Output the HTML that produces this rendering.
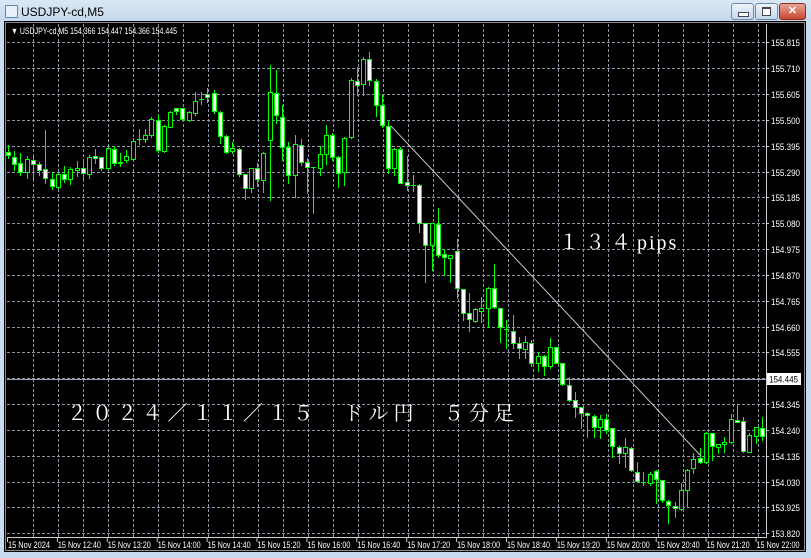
<!DOCTYPE html>
<html><head><meta charset="utf-8"><style>
html,body{margin:0;padding:0;width:811px;height:558px;overflow:hidden;background:#c8dcf0;font-family:"Liberation Sans",sans-serif}
#title{position:absolute;left:0;top:0;width:811px;height:22px;background:linear-gradient(#dbe8f5,#c3d7ec)}
#title .t{position:absolute;left:21px;top:5px;font-size:12px;color:#000}
.ic{position:absolute;left:5px;top:5px;width:11px;height:11px;border:1px solid #5a87b8;background:#e8f0fa;border-radius:1px}
.btn{position:absolute;top:3px;height:15px;border:1px solid #6d8bb0;border-radius:3px;background:linear-gradient(#eef4fb,#c4d6ea)}
#chart{position:absolute;left:4px;top:21px}
</style></head><body>
<div id="title"><div class="ic"></div><span class="t">USDJPY-cd,M5</span>
<div class="btn" style="left:731px;width:21px"><div style="position:absolute;left:6px;top:8px;width:9px;height:3px;background:#fff;border:1px solid #445"></div></div>
<div class="btn" style="left:755px;width:21px"><div style="position:absolute;left:6px;top:3px;width:7px;height:6px;background:#fff;border:1px solid #445;border-top-width:2px"></div></div>
<div class="btn" style="left:779px;width:25px;background:linear-gradient(#e8a496,#c8462e);border-color:#8a3020;color:#fff;font-size:11px;font-weight:bold;text-align:center;line-height:15px">✕</div>
</div>
<svg id="chart" width="802" height="531" viewBox="4 21 802 531" xmlns="http://www.w3.org/2000/svg" style="position:absolute;left:4px;top:21px">
<rect x="4" y="21" width="802" height="531" fill="#000"/>
<rect x="5.5" y="22.5" width="799" height="528" fill="none" stroke="#8a8a8a" stroke-width="1"/>
<g id="grid" stroke="#8c98a8" stroke-width="1" stroke-dasharray="3,2" shape-rendering="crispEdges"></g>
<line x1="7" y1="379.5" x2="766" y2="379.5" stroke="#9aa4b0" stroke-width="1"/>
<line x1="766.5" y1="24" x2="766.5" y2="537" stroke="#d0d0d0" stroke-width="1"/>
<line x1="7" y1="537.5" x2="767" y2="537.5" stroke="#d0d0d0" stroke-width="1"/>
<g id="candles" shape-rendering="crispEdges"></g>
<line x1="391" y1="126" x2="701" y2="456" stroke="#c8c8c8" stroke-width="1"/>
<g id="labels" fill="#fff" font-family="Liberation Sans, sans-serif" font-size="9"></g>
<text x="11" y="34" fill="#fff" font-size="9" font-family="Liberation Sans, sans-serif" textLength="166" lengthAdjust="spacingAndGlyphs">▼ USDJPY-cd,M5  154.366 154.447 154.366 154.445</text>
<rect x="767" y="373" width="34" height="12" fill="#fff"/>
<text x="769" y="382.5" fill="#000" font-size="9" font-family="Liberation Sans, sans-serif" textLength="29" lengthAdjust="spacingAndGlyphs">154.445</text>
<text x="559" y="249" fill="#fff" font-size="20" font-family="Liberation Serif, Noto Serif CJK SC, serif"><tspan letter-spacing="6">１３４</tspan><tspan letter-spacing="2">pips</tspan></text>
<text x="67" y="420" fill="#fff" font-size="20" textLength="447" lengthAdjust="spacing" font-family="Liberation Serif, Noto Serif CJK SC, serif">２０２４／１１／１５　ドル円　５分足</text>
</svg>
<script>
var ns="http://www.w3.org/2000/svg";
function el(p,t,a,txt){var e=document.createElementNS(ns,t);for(var k in a)e.setAttribute(k,a[k]);if(txt!=null)e.textContent=txt;p.appendChild(e);return e;}
var g=document.getElementById('grid'),lb=document.getElementById('labels');
var prices=["155.815","155.710","155.605","155.500","155.395","155.290","155.185","155.080","154.975","154.870","154.765","154.660","154.555","154.450","154.345","154.240","154.135","154.030","153.925","153.820"];
for(var k=0;k<20;k++){var y=Math.round(42.3+25.84*k)+0.5;el(g,'line',{x1:7,y1:y,x2:766,y2:y});el(lb,'line',{x1:766,y1:y,x2:769,y2:y,stroke:'#ccc'});if(k!=13)el(lb,'text',{x:771,y:y+3.5,textLength:29,lengthAdjust:'spacingAndGlyphs'},prices[k]);}
for(var x=33.5;x<766;x+=25){el(g,'line',{x1:x,y1:24,x2:x,y2:537});}
var times=["15 Nov 2024","15 Nov 12:40","15 Nov 13:20","15 Nov 14:00","15 Nov 14:40","15 Nov 15:20","15 Nov 16:00","15 Nov 16:40","15 Nov 17:20","15 Nov 18:00","15 Nov 18:40","15 Nov 19:20","15 Nov 20:00","15 Nov 20:40","15 Nov 21:20","15 Nov 22:00"];
for(var k=0;k<16;k++){var x=7+49.9*k;el(lb,'line',{x1:x+0.5,y1:538,x2:x+0.5,y2:542,stroke:'#ccc'});el(lb,'text',{x:x+1,y:548,textLength:k==0?42:43,lengthAdjust:'spacingAndGlyphs'},times[k]);}
var C=[["W",152,155,145,158],["W",157,164,151,170],["W",163,172,153,175],["B",159,172,156,178],["W",160,164,155,178],["W",164,170,162,175],["W",169,178,130,183],["W",179,186,172,189],["B",174,187,173,188],["W",174,179,166,182],["B",169,179,167,184],["B",168,170,161,176],["W",168,173,160,179],["B",157,174,155,178],["W",156,158,149,163],["W",157,168,157,170],["B",148,168,147,169],["W",149,163,146,165],["B",162,163,153,166],["B",156,160,150,162],["B",141,159,138,160],["B",139,139,129,144],["B",135,139,129,142],["B",119,135,117,137],["W",120,150,115,152],["B",126,151,125,152],["B",112,127,111,127],["W",108,111,108,114],["W",108,119,108,120],["B",112,120,111,121],["B",101,113,92,115],["B",99,99,92,104],["W",94,97,88,102],["W",93,111,90,113],["W",112,136,111,143],["W",136,152,135,153],["B",148,151,142,153],["W",149,174,148,176],["W",174,188,174,199],["B",168,188,168,192],["W",168,179,163,186],["B",153,180,152,192],
["B",92,140,65,200],["W",93,115,70,123],["W",117,147,105,160],["W",147,175,142,183],["B",144,175,135,197],["W",145,162,139,165],["W",162,167,158,193],["B",167,167,167,213],["B",154,168,146,175],["B",135,154,125,164],["W",135,157,133,160],["W",157,173,156,187],["B",138,172,137,185],["B",80,137,78,138],["W",81,85,67,95],["B",59,84,57,95],["W",59,80,52,85],["W",81,105,79,116],["W",105,125,95,127],["W",126,168,121,173],["B",149,168,148,175],["W",149,183,147,183],["W",182,185,156,190],["B",185,185,175,191],["W",185,223,184,232],["W",223,245,223,282],["B",223,245,223,270],["W",224,255,208,257],["W",254,257,249,275],["B",255,258,255,282],["W",251,288,239,298],["W",289,313,289,320],["W",313,319,293,331],["B",309,321,308,322],["B",308,311,297,322],["B",288,308,287,327],["W",288,307,264,308],["W",308,327,308,342],["B",329,329,320,348],["W",331,343,315,348],["W",343,348,337,358],["B",342,349,336,358],["W",343,363,340,366],
["B",356,363,353,371],["W",356,366,355,375],["B",347,366,338,368],["W",347,363,347,363],["W",363,384,363,385],["W",385,400,377,401],["W",400,407,392,417],["W",407,413,407,428],["W",413,415,412,437],["W",416,427,415,437],["B",419,427,415,438],["W",419,430,414,433],["W",428,446,428,457],["W",447,453,446,463],["B",447,453,438,467],["W",448,470,447,471],["W",472,481,462,482],["B",482,482,472,485],["B",474,483,472,485],["W",471,479,470,503],["W",480,500,480,502],["W",501,505,500,523],["W",506,508,502,517],["B",490,509,483,510],["B",470,490,469,507],["B",459,468,453,473],["W",458,462,448,463],["B",433,462,432,463],["W",433,446,433,460],["B",444,447,444,453],["B",442,444,437,452],["B",419,442,414,443],["W",420,422,404,422],["W",421,451,417,452],["B",435,452,433,452],["B",427,436,427,443],["W",428,436,417,440]];
var cg=document.getElementById('candles');
for(var i=0;i<C.length;i++){var c=C[i];var x=Math.round(8+6.23*i);
el(cg,'line',{x1:x+0.5,y1:c[3],x2:x+0.5,y2:c[4]+1,stroke:'#00ff00'});
var h=c[2]-c[1];
if(h<1){el(cg,'line',{x1:x-2,y1:c[1]+0.5,x2:x+3,y2:c[1]+0.5,stroke:'#00ff00'});}
else el(cg,'rect',{x:x-1.5,y:c[1]+0.5,width:4,height:h,fill:c[0]=="W"?"#fff":"#000",stroke:'#00ff00','stroke-width':1});
}
</script>
</body></html>
